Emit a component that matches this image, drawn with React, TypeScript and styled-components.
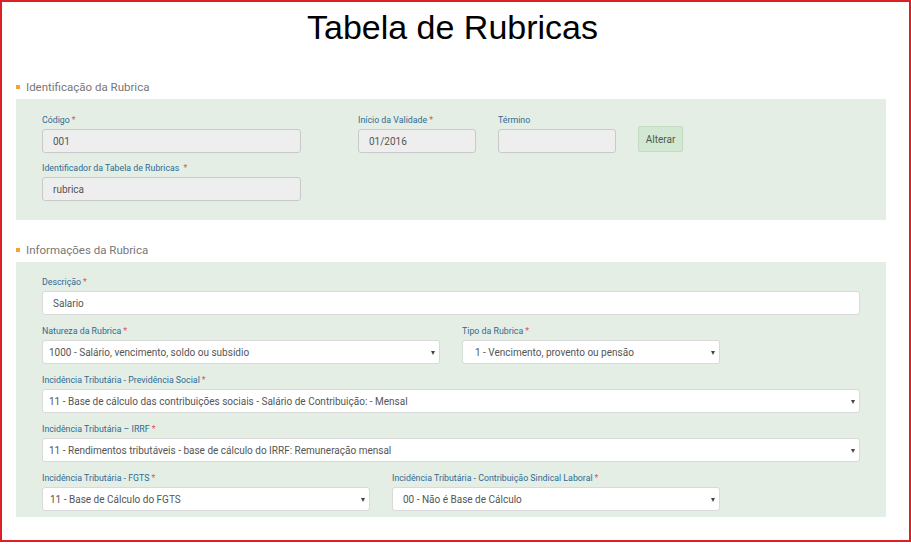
import React from "react";
import styled, { createGlobalStyle } from "styled-components";

const GlobalStyle = createGlobalStyle`
  body {
    margin: 0;
    background: #fff;
    font-family: Roboto, "Liberation Sans", sans-serif;
  }
`;

const Frame = styled.div`
  box-sizing: border-box;
  width: 911px;
  height: 542px;
  border: 2px solid #dd1f26;
  background: #fff;
`;

const Title = styled.h1`
  margin: 5px 6px 0 0;
  font-family: "Liberation Sans", Arial, sans-serif;
  font-weight: normal;
  font-size: 34px;
  line-height: 40px;
  color: #000;
  text-align: center;
`;

const Content = styled.div`
  padding: 32px 0 0 14px;
`;

const SectionHeader = styled.div<{ $top?: number }>`
  display: flex;
  align-items: center;
  gap: 6px;
  height: 16px;
  margin-top: ${(p) => p.$top ?? 0}px;
  margin-bottom: 4px;
  font-size: 11.5px;
  color: #777;

  &::before {
    content: "";
    width: 4px;
    height: 4px;
    background: #f2a33a;
  }
`;

const Panel = styled.div<{ $pt: number; $pb: number; $gap: number }>`
  box-sizing: border-box;
  width: 870px;
  background: #e4eee4;
  padding: ${(p) => p.$pt}px 26px ${(p) => p.$pb}px;
  display: flex;
  flex-direction: column;
  gap: ${(p) => p.$gap}px;
`;

const Row = styled.div`
  display: flex;
  gap: 22px;
`;

const Field = styled.div<{ $w: number; $mr?: number }>`
  display: flex;
  flex-direction: column;
  width: ${(p) => p.$w}px;
  margin-right: ${(p) => p.$mr ?? 0}px;
`;

const Label = styled.label`
  font-size: 8.8px;
  line-height: 10px;
  height: 10px;
  margin-bottom: 4px;
  color: #2f6a94;
  white-space: nowrap;

  span {
    color: #e05555;
    margin-left: 2px;
  }
`;

const TextInput = styled.input<{ $locked?: boolean }>`
  box-sizing: border-box;
  width: 100%;
  height: 24px;
  margin: 0;
  padding: 0 10px;
  border: 1px solid ${(p) => (p.$locked ? "#c9c9c9" : "#d9d9d9")};
  border-radius: 3px;
  background: ${(p) => (p.$locked ? "#eeeeee" : "#ffffff")};
  font-family: Roboto, "Liberation Sans", sans-serif;
  font-size: 10px;
  color: #555;
  outline: none;
`;

const SelectBox = styled.div<{ $indent: number }>`
  box-sizing: border-box;
  height: 24px;
  display: flex;
  align-items: center;
  justify-content: space-between;
  padding: 0 4px 0 ${(p) => p.$indent}px;
  border: 1px solid #d9d9d9;
  border-radius: 3px;
  background: #fff;
  font-size: 10px;
  color: #555;
  white-space: nowrap;
`;

const Caret = styled.i`
  width: 0;
  height: 0;
  border-left: 2.5px solid transparent;
  border-right: 2.5px solid transparent;
  border-top: 4px solid #444;
  margin-top: 1px;
`;

const Button = styled.button`
  align-self: flex-end;
  box-sizing: border-box;
  width: 45px;
  height: 26px;
  margin-bottom: 1px;
  padding: 0;
  border: 1px solid #c3dac3;
  border-radius: 2px;
  background: #d3e8d3;
  font-family: Roboto, "Liberation Sans", sans-serif;
  font-size: 10px;
  color: #4b5a4b;
`;

const Req = () => <span>*</span>;

const Select = ({ value, indent = 6 }: { value: string; indent?: number }) => (
  <SelectBox $indent={indent}>
    {value}
    <Caret />
  </SelectBox>
);

export default function App() {
  return (
    <>
      <GlobalStyle />
      <Frame>
        <Title>Tabela de Rubricas</Title>
        <Content>
          <SectionHeader>Identificação da Rubrica</SectionHeader>
          <Panel $pt={16} $pb={19} $gap={10}>
            <Row>
              <Field $w={259} $mr={35}>
                <Label>
                  Código<Req />
                </Label>
                <TextInput $locked readOnly defaultValue="001" />
              </Field>
              <Field $w={118}>
                <Label>
                  Início da Validade<Req />
                </Label>
                <TextInput $locked readOnly defaultValue="01/2016" />
              </Field>
              <Field $w={118}>
                <Label>Término</Label>
                <TextInput $locked readOnly defaultValue="" />
              </Field>
              <Button>Alterar</Button>
            </Row>
            <Row>
              <Field $w={259}>
                <Label>
                  Identificador da Tabela de Rubricas <Req />
                </Label>
                <TextInput $locked readOnly defaultValue="rubrica" />
              </Field>
            </Row>
          </Panel>

          <SectionHeader $top={22}>Informações da Rubrica</SectionHeader>
          <Panel $pt={15} $pb={6} $gap={11}>
            <Row>
              <Field $w={818}>
                <Label>
                  Descrição<Req />
                </Label>
                <TextInput readOnly defaultValue="Salario" />
              </Field>
            </Row>
            <Row>
              <Field $w={398}>
                <Label>
                  Natureza da Rubrica<Req />
                </Label>
                <Select value="1000 - Salário, vencimento, soldo ou subsídio" />
              </Field>
              <Field $w={258}>
                <Label>
                  Tipo da Rubrica<Req />
                </Label>
                <Select indent={12} value="1 - Vencimento, provento ou pensão" />
              </Field>
            </Row>
            <Row>
              <Field $w={818}>
                <Label>
                  Incidência Tributária - Previdência Social<Req />
                </Label>
                <Select value="11 - Base de cálculo das contribuições sociais - Salário de Contribuição: - Mensal" />
              </Field>
            </Row>
            <Row>
              <Field $w={818}>
                <Label>
                  Incidência Tributária – IRRF<Req />
                </Label>
                <Select value="11 - Rendimentos tributáveis - base de cálculo do IRRF: Remuneração mensal" />
              </Field>
            </Row>
            <Row>
              <Field $w={328}>
                <Label>
                  Incidência Tributária - FGTS<Req />
                </Label>
                <Select indent={7} value="11 - Base de Cálculo do FGTS" />
              </Field>
              <Field $w={328}>
                <Label>
                  Incidência Tributária - Contribuição Sindical Laboral<Req />
                </Label>
                <Select indent={10} value="00 - Não é Base de Cálculo" />
              </Field>
            </Row>
          </Panel>
        </Content>
      </Frame>
    </>
  );
}
